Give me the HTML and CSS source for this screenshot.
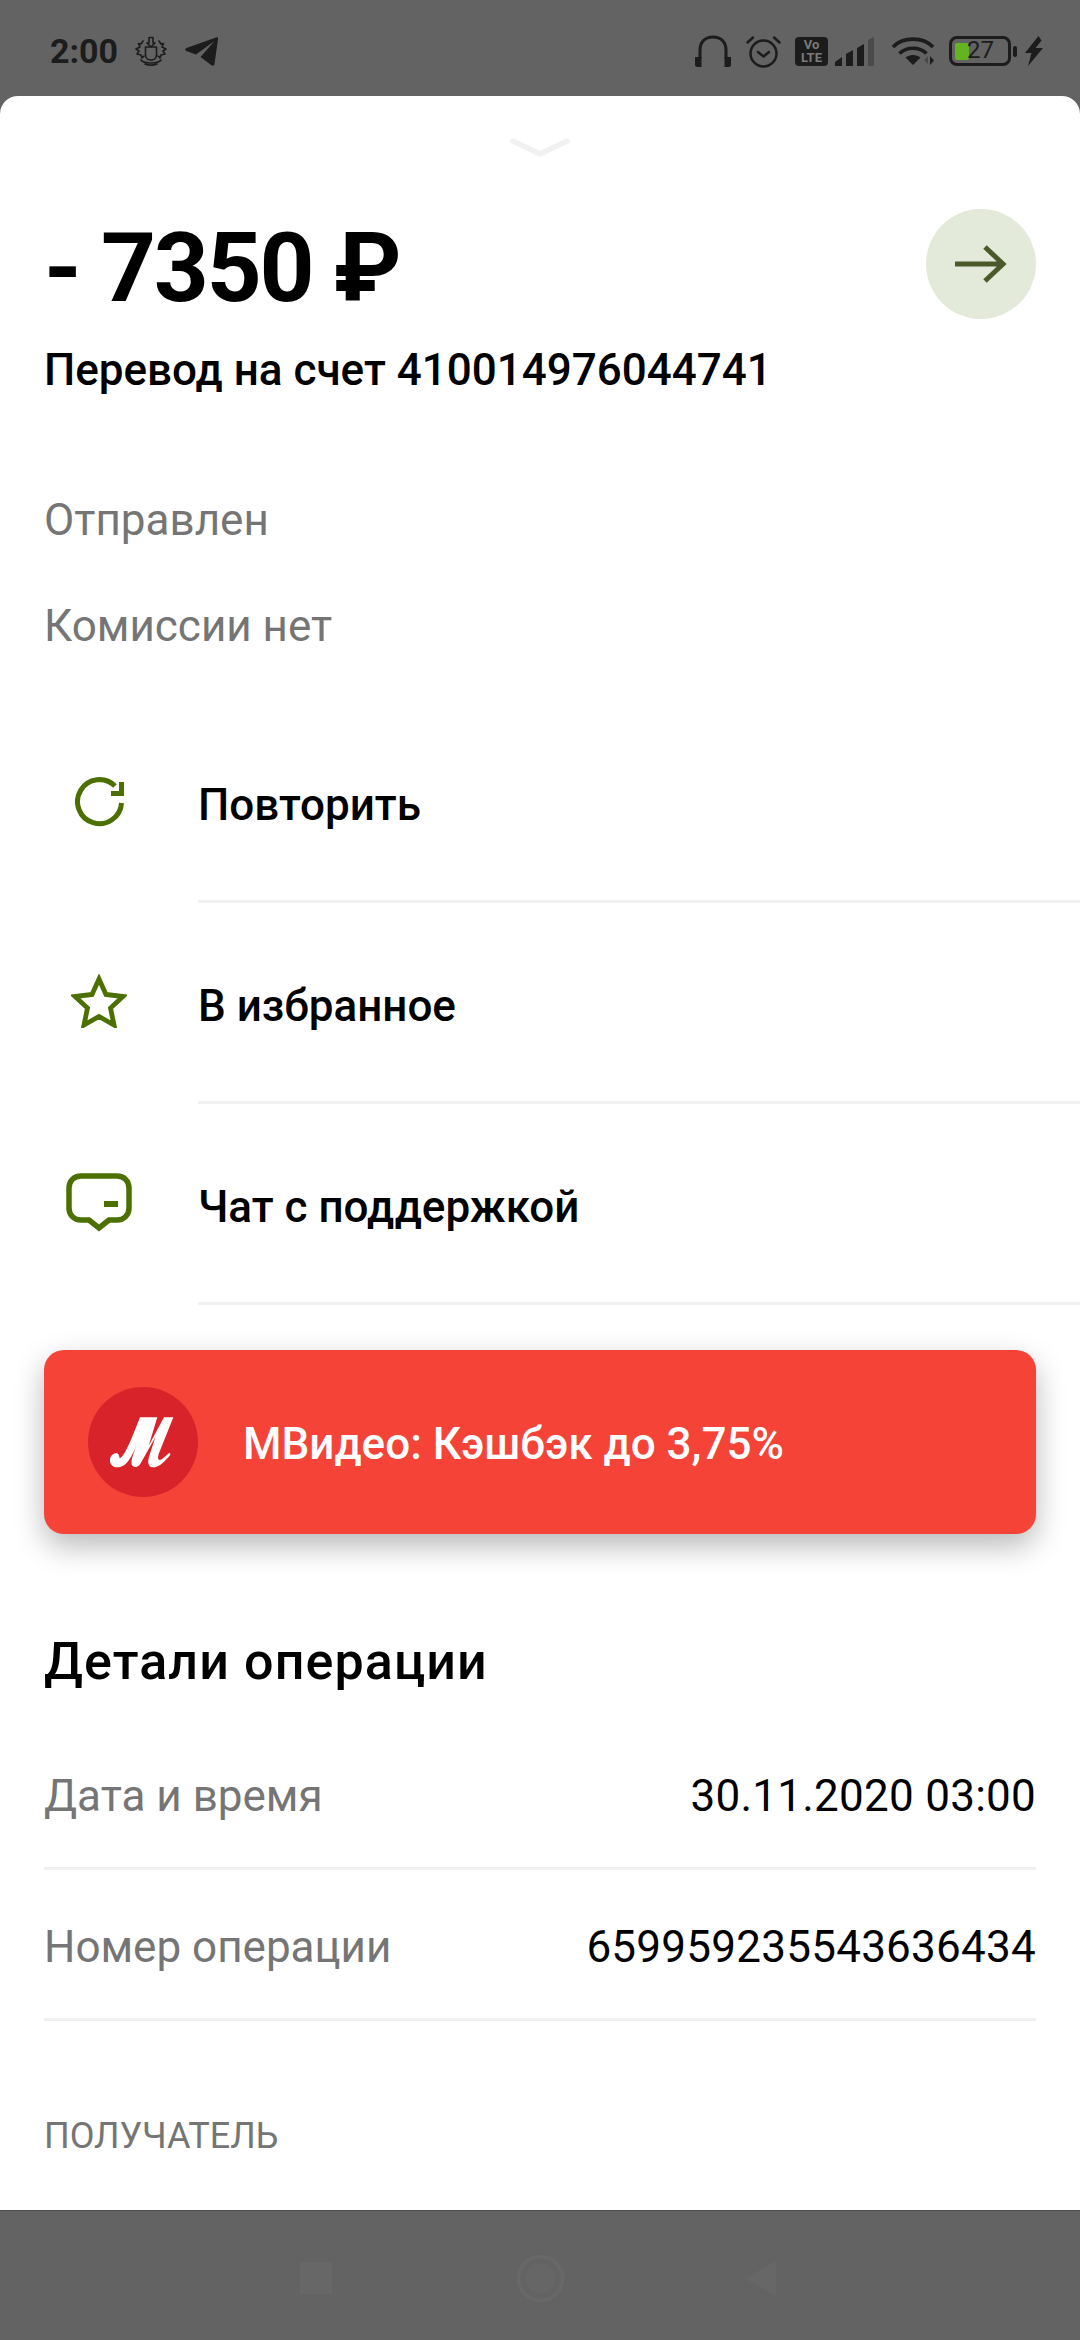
FILE: index.html
```html
<!DOCTYPE html>
<html lang="ru">
<head>
<meta charset="utf-8">
<title>Перевод</title>
<link rel="stylesheet" href="styles.css">
</head>
<body>
<div class="screen">
  <header class="status">
    <div class="status-left">
      <span class="time">2:00</span>
      <svg class="ic-emblem" viewBox="0 0 32 30" fill="none" stroke="#1c1c1c" stroke-width="1.600" stroke-linejoin="round" stroke-linecap="round">
        <path d="M14 7V1.500h4V7h2l-4 4-4-4z"/>
        <path d="M10.500 11h11v8c0 3-2.500 5-5.500 5s-5.500-2-5.500-5z"/>
        <path d="M8 5 6 8 3.500 7.500 5 11 1 13l3 2-2 3 4 1 1 3 2-2"/>
        <path d="M24 5l2 3 2.500-.5L27 11l4 2-3 2 2 3-4 1-1 3-2-2"/>
        <path d="M6 24c3 4 17 4 20 0M10 28c4 1.500 8 1.500 12 0"/>
      </svg>
      <svg class="ic-tg" viewBox="0 0 33 29"><path fill="#1c1c1c" d="M31 .5c1.500-.5 2.200.5 2 1.800L29.500 27c-.3 1.700-1.800 2.300-3 1.300L15.500 20l14-16-18.500 13.500L1.500 14c-1.800-.8-1.800-2.200 0-3z"/></svg>
    </div>
    <div class="status-right">
      <svg class="ic-head" viewBox="0 0 36 32" fill="none" stroke="#1c1c1c"><path stroke-width="3" d="M5 24V15C5 7 10 2 18 2s13 5 13 13v9"/><path fill="#1c1c1c" stroke="none" d="M0 22h6.500v10H2.500C1 32 0 31 0 30zM29.500 22H36v8c0 1-1 2-2.500 2h-4z"/></svg>
      <svg class="ic-alarm" viewBox="0 0 35 33" fill="none" stroke="#1c1c1c" stroke-width="2.500" stroke-linecap="round" stroke-linejoin="round"><circle cx="17.500" cy="18.500" r="13"/><path d="M12 17l5.500 4.500L23 17M1.500 7.500 7 2.500M28 2.500l5.500 5"/></svg>
      <div class="volte"><span>Vo</span><span>LTE</span></div>
      <svg class="ic-signal" viewBox="0 0 40 29"><path fill="#1c1c1c" d="M0 29v-4l7-5v9zM11 29V17l7-4v16zM22 29V11l7-4v22z"/><path fill="#4a4a4a" d="M33 29V3l6-3v29z"/></svg>
      <svg class="ic-wifi" viewBox="0 0 44 30" fill="none" stroke="#1c1c1c" stroke-width="3.600"><path d="M2 11C12 .5 32 .5 42 11M8.500 17.500c7-7 20-7 27 0"/><path fill="#1c1c1c" stroke="none" d="M14.500 21.500c4-3.500 11-3.500 15 0L22 29z"/><path fill="#4a4a4a" stroke="none" d="M37 20v8l-4-4z"/><path fill="#1c1c1c" stroke="none" d="M39 20v9l4-4.500z"/></svg>
      <div class="battery">
        <div class="batt-body"><span class="batt-fill"></span><span class="batt-num">27</span></div>
        <span class="batt-nub"></span>
      </div>
      <svg class="ic-bolt" viewBox="0 0 18 30"><path fill="#1c1c1c" d="M13.500 0 0 17h6.500L3 30l15-18h-7.500l6-7.500z"/></svg>
    </div>
  </header>

  <main class="sheet">
    <div class="handle">
      <svg class="handle-ic" viewBox="0 0 60 20" fill="none" stroke="#f1f1f1" stroke-width="5.500" stroke-linecap="round" stroke-linejoin="round"><path d="M3 3l27 13L57 3"/></svg>
    </div>

    <section class="head">
      <div class="head-text">
        <h1 class="amount">- 7350 ₽</h1>
        <p class="subtitle">Перевод на счет 410014976044741</p>
      </div>
      <div class="go">
        <svg class="go-ic" viewBox="0 0 52 38" fill="none" stroke="#4a5a2b" stroke-width="5"><path d="M0 19h48M30 2l18 17-18 17"/></svg>
      </div>
    </section>

    <p class="note note-first">Отправлен</p>
    <p class="note note-second">Комиссии нет</p>

    <nav class="actions">
      <a class="action">
        <span class="action-icon">
          <svg class="ic-repeat" viewBox="0 0 50 50" fill="none" stroke="#4b7000" stroke-width="5"><path d="M46.500 26A22 22 0 1 1 40 9"/><path d="M46.500 5V16.500H36"/></svg>
        </span>
        <span class="action-label">Повторить</span>
      </a>
      <a class="action">
        <span class="action-icon">
          <svg class="ic-star" viewBox="0 0 56 54" fill="none" stroke="#4b7000" stroke-width="4.800" stroke-linejoin="miter"><path d="M28 5l7 15.500 17 2-12.500 11.500 3.500 17L28 42.500 13 51l3.500-17L4 22.500l17-2z"/></svg>
        </span>
        <span class="action-label">В избранное</span>
      </a>
      <a class="action">
        <span class="action-icon">
          <svg class="ic-chat" viewBox="0 0 66 60" fill="none" stroke="#4b7000" stroke-width="5.500"><path d="M15 3h36c7 0 12 5 12 12v20c0 7-5 12-12 12h-8L33 55l-10-8h-8C8 47 3 42 3 35V15C3 8 8 3 15 3z"/><path d="M38 31h14" stroke-width="6"/></svg>
        </span>
        <span class="action-label">Чат с поддержкой</span>
      </a>
    </nav>

    <a class="promo">
      <span class="promo-logo">
        <svg class="promo-m" viewBox="-36 -51 330 330"><path fill="#fff" d="M120 40H172L146 125 192 40H220L176 150C170 170 180 172 190 162L208 146 212 151C196 172 176 192 158 190 142 188 143 170 148 155L166 100 122 178C116 190 104 192 98 186 92 180 94 168 100 150L114 110C100 150 82 190 52 190 36 190 28 178 30 165 32 150 50 142 56 152 60 160 56 166 64 160 80 145 100 90 120 40Z"/></svg>
      </span>
      <span class="promo-text">МВидео: Кэшбэк до 3,75%</span>
    </a>

    <h2 class="details-title">Детали операции</h2>
    <div class="details">
      <div class="detail"><span class="detail-key">Дата и время</span><span class="detail-val">30.11.2020 03:00</span></div>
      <div class="detail"><span class="detail-key">Номер операции</span><span class="detail-val">659959235543636434</span></div>
    </div>
    <p class="section-cap">ПОЛУЧАТЕЛЬ</p>
  </main>

  <footer class="navbar">
    <span class="nav-square"></span>
    <svg class="nav-circle" viewBox="0 0 49 49" fill="none" stroke="#686868" stroke-width="3.500"><circle cx="24.500" cy="24.500" r="22"/><circle cx="24.500" cy="24.500" r="15" fill="#666666" stroke="none"/></svg>
    <svg class="nav-back" viewBox="0 0 31 35"><path fill="#676767" d="M31 0v35L0 17.500z"/></svg>
  </footer>
</div>
</body>
</html>
```

FILE: styles.css
```css
* { box-sizing: border-box; }
html, body { margin: 0; padding: 0; }
body { font-family: Roboto, "Noto Sans", sans-serif; background: #636363; }
.screen { width: 1080px; height: 2340px; display: flex; flex-direction: column; overflow: hidden; background: #636363; }

/* status bar */
.status { height: 96px; flex: none; display: flex; justify-content: space-between; align-items: flex-start; padding: 34px 37px 0 50px; color: #1c1c1c; }
.status-left { display: flex; align-items: center; height: 34px; }
.time { font-size: 34px; font-weight: 700; line-height: 34px; width: 85px; }
.ic-emblem { width: 32px; height: 30px; margin-right: 18px; }
.ic-tg { width: 33px; height: 29px; }
.status-right { display: flex; align-items: center; height: 34px; }
.ic-head { width: 36px; height: 32px; margin-right: 15px; }
.ic-alarm { width: 35px; height: 33px; margin-right: 14px; }
.volte { width: 33px; height: 29px; margin-right: 7px; background: #1c1c1c; border-radius: 4px; color: #7a7a7a; font-size: 13px; font-weight: 700; line-height: 13px; display: flex; flex-direction: column; align-items: center; justify-content: center; }
.ic-signal { width: 40px; height: 29px; margin-right: 16px; }
.ic-wifi { width: 44px; height: 30px; margin-right: 14px; }
.battery { display: flex; align-items: center; margin-right: 8px; }
.batt-body { width: 62px; height: 30px; border: 3.5px solid #1c1c1c; border-radius: 8px; display: flex; align-items: center; padding-left: 3px; position: relative; }
.batt-fill { width: 14px; height: 17px; background: #62b420; border-radius: 2px; }
.batt-num { position: absolute; left: 15px; top: 0; font-size: 24px; line-height: 23px; color: #1c1c1c; }
.batt-nub { width: 4px; height: 11px; margin-left: 2px; background: #1c1c1c; border-radius: 2px; }
.ic-bolt { width: 18px; height: 30px; }

/* sheet */
.sheet { flex: 1; min-height: 0; background: #fff; border-radius: 18px 18px 0 0; overflow: hidden; color: #000; }
.handle { padding-top: 42px; height: 94px; display: flex; justify-content: center; }
.handle-ic { width: 60px; height: 20px; }
.head { display: flex; justify-content: space-between; padding: 19px 44px 0; }
.amount { margin: 3px 0 0; font-size: 96px; line-height: 112px; font-weight: 700; letter-spacing: -2.3px; }
.subtitle { margin: 21px 0 0; font-size: 44px; line-height: 50px; font-weight: 500; }
.go { width: 110px; height: 110px; border-radius: 50%; background: #e3ead9; display: flex; align-items: center; justify-content: center; }
.go-ic { width: 52px; height: 38px; }
.note { margin: 0; padding: 0 44px; font-size: 44px; line-height: 50px; color: #757575; }
.note-first { margin-top: 100px; }
.note-second { margin-top: 56px; }

/* actions */
.actions { margin-top: 51px; display: flex; flex-direction: column; }
.action { height: 201px; display: flex; align-items: center; position: relative; padding-top: 4px; }
.action::after { content: ""; position: absolute; left: 198px; right: 0; bottom: 0; height: 3px; background: #f1f1f1; }
.action-icon { width: 198px; flex: none; display: flex; justify-content: center; }
.action-label { font-size: 44px; font-weight: 500; line-height: 50px; }
.ic-repeat { width: 50px; height: 50px; margin-bottom: 5px; margin-left: 1px; }
.ic-star { width: 56px; height: 54px; margin-bottom: 10px; }
.ic-chat { width: 66px; height: 60px; margin-bottom: 8px; }

/* promo */
.promo { margin: 45px 44px 0; height: 184px; background: #f54337; border-radius: 20px; box-shadow: 0 12px 30px rgba(0,0,0,.28); display: flex; align-items: center; padding-left: 44px; }
.promo-logo { width: 110px; height: 110px; flex: none; border-radius: 50%; background: #d8232a; }
.promo-m { width: 110px; height: 110px; display: block; }
.promo-text { margin: 4px 0 0 45px; font-size: 44px; font-weight: 500; color: #fff; }

/* details */
.details-title { margin: 98px 44px 0; font-size: 52px; line-height: 60px; font-weight: 500; letter-spacing: 1.1px; }
.details { margin: 27px 44px 0; }
.detail { height: 151px; display: flex; justify-content: space-between; align-items: center; border-bottom: 3px solid #f1f1f1; font-size: 44px; padding-top: 6px; }
.detail-key { color: #757575; }
.detail-val { font-weight: 450; letter-spacing: .25px; }
.section-cap { margin: 95px 44px 0; font-size: 36px; line-height: 40px; color: #757575; }

/* nav bar */
.navbar { height: 130px; flex: none; display: flex; align-items: center; justify-content: center; position: relative; box-shadow: inset 0 1px 0 #4e4e4e; }
.nav-square { position: absolute; left: 300px; top: 52px; width: 32px; height: 32px; background: #676767; }
.nav-circle { width: 49px; height: 49px; margin: 7px 0 0 1px; }
.nav-back { position: absolute; left: 745px; top: 51px; width: 31px; height: 35px; }
```
